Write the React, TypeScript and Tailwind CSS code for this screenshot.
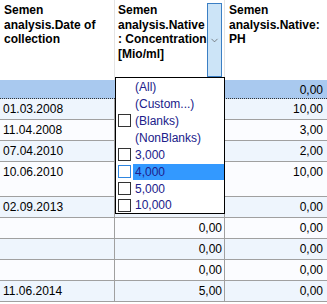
import { ChevronDown } from 'lucide-react';

type Row = { date: string; conc: string; ph: string; alt: boolean; tall?: boolean };

const rows: Row[] = [
  { date: '01.03.2008', conc: '', ph: '10,00', alt: true },
  { date: '11.04.2008', conc: '', ph: '3,00', alt: false },
  { date: '07.04.2010', conc: '', ph: '2,00', alt: true },
  { date: '10.06.2010', conc: '', ph: '10,00', alt: false, tall: true },
  { date: '02.09.2013', conc: '', ph: '0,00', alt: true },
  { date: '', conc: '0,00', ph: '0,00', alt: false },
  { date: '', conc: '0,00', ph: '0,00', alt: true },
  { date: '', conc: '0,00', ph: '0,00', alt: false },
  { date: '11.06.2014', conc: '5,00', ph: '0,00', alt: true },
];

const items = [
  { label: '(All)', check: false },
  { label: '(Custom...)', check: false },
  { label: '(Blanks)', check: true },
  { label: '(NonBlanks)', check: false },
  { label: '3,000', check: true },
  { label: '4,000', check: true, active: true },
  { label: '5,000', check: true },
  { label: '10,000', check: true, last: true },
];

function FilterPopup() {
  return (
    <div className="absolute left-[115px] top-[77px] w-[110px] border border-black bg-white">
      {items.map((it) => (
        <div
          key={it.label}
          className={`flex items-center ${it.last ? 'h-[16px]' : 'h-[17px]'}`}
        >
          <div className="ml-[2px] flex w-[13px] justify-center">
            {it.check && (
              <span
                className={`block h-[13px] w-[13px] border bg-white ${
                  it.active ? 'border-[#2f86e0]' : 'border-[#333]'
                }`}
              />
            )}
          </div>
          <div
            className={`ml-[2px] flex h-[16px] flex-1 items-center pl-[2px] text-[12px] text-[#20208a] ${
              it.active ? 'bg-[#3399ff]' : ''
            }`}
          >
            {it.label}
          </div>
        </div>
      ))}
    </div>
  );
}

export default function App() {
  return (
    <div
      className="relative h-[304px] w-[327px] overflow-hidden bg-white text-black"
      style={{ fontFamily: '"Liberation Sans", Arial, sans-serif' }}
    >
      {/* header */}
      <div className="flex h-[80px] text-[12px] font-bold leading-[14.5px]">
        <div className="w-[115px] border-r border-[#e4e4e4] pl-[4px] pt-[3px]">
          Semen<br />analysis.Date of<br />collection
        </div>
        <div className="flex w-[110px] border-r border-[#e4e4e4]">
          <div className="flex-1 pl-[3px] pt-[3px] whitespace-nowrap">
            Semen<br />analysis.Native<br />: Concentration<br />[Mio/ml]
          </div>
          <div className="mr-[2px] mt-[3px] mb-[3px] flex w-[15px] items-center justify-center border border-[#3b7fc4] bg-[#cce4f7]">
            <ChevronDown size={11} strokeWidth={1.5} className="text-[#555]" />
          </div>
        </div>
        <div className="flex-1 pl-[4px] pt-[3px]">
          Semen<br />analysis.Native:<br />PH
        </div>
      </div>

      {/* filter row */}
      <div className="flex h-[19px] border-b border-dotted border-[#333] bg-[#a9c9ef] text-[12px] leading-[15px]">
        <div className="w-[115px]" />
        <div className="w-[110px]" />
        <div className="flex-1 pr-[4px] pt-[3px] text-right">0,00</div>
      </div>

      {/* data rows */}
      {rows.map((r, i) => (
        <div
          key={i}
          className={`flex border-b border-[#a0a0a0] text-[12px] leading-[15px] ${
            r.tall ? 'h-[35px]' : 'h-[21px]'
          } ${r.alt ? 'bg-[#eef5fd]' : 'bg-[#fbfcff]'}`}
        >
          <div className="w-[115px] border-r border-[#a0a0a0] pl-[3px] pt-[3px]">{r.date}</div>
          <div className="w-[110px] border-r border-[#a0a0a0] pr-[2px] pt-[3px] text-right">{r.conc}</div>
          <div className="flex-1 pr-[4px] pt-[3px] text-right">{r.ph}</div>
        </div>
      ))}

      <FilterPopup />
    </div>
  );
}
